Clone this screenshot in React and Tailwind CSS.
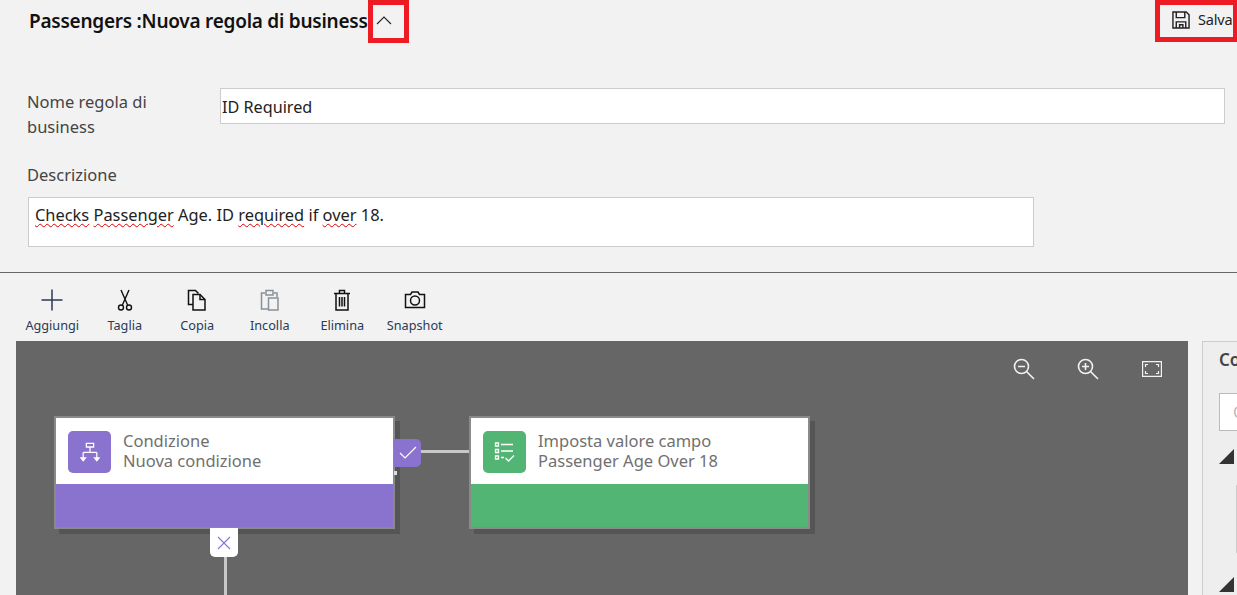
import React from "react";

function CutIcon() {
  return (
    <svg width="24" height="24" viewBox="0 0 24 24" fill="none" stroke="#111" strokeWidth="1.4">
      <path d="M8 2l6.600 15M16 2L9.400 17" />
      <circle cx="8" cy="19.500" r="2.500" />
      <circle cx="16" cy="19.500" r="2.500" />
    </svg>
  );
}

function CopyIcon() {
  return (
    <svg width="24" height="24" viewBox="0 0 24 24" fill="none" stroke="#111" strokeWidth="1.500">
      <path d="M8 16.500H3.500V2.500h7l3 3" />
      <path d="M8 6.500h7l5 5v10.500H8z" fill="#f2f2f2" />
      <path d="M15 6.500v5h5" />
    </svg>
  );
}

function PasteIcon() {
  return (
    <svg width="24" height="24" viewBox="0 0 24 24" fill="none" stroke="#8a9099" strokeWidth="1.500">
      <path d="M7 5H3.500v16H10M16 5h3v4" />
      <path d="M8 2.500h7V7H8z" />
      <path d="M10.500 10h9.500v12h-9.500z" fill="#f2f2f2" />
    </svg>
  );
}

function TrashIcon() {
  return (
    <svg width="24" height="24" viewBox="0 0 24 24" fill="none" stroke="#111" strokeWidth="1.500">
      <path d="M4 5.500h16M9.500 5V2.500h5V5M6 5.500V22h12V5.500" />
      <path d="M9.500 9v9.500M12 9v9.500M14.500 9v9.500" />
    </svg>
  );
}

function CameraIcon() {
  return (
    <svg width="24" height="24" viewBox="0 0 24 24" fill="none" stroke="#111" strokeWidth="1.500">
      <path d="M2.500 6.500h5l1.500-2.500h6l1.500 2.500h5v13h-19z" />
      <circle cx="12" cy="12.500" r="4.500" />
    </svg>
  );
}

function PlusIcon() {
  return (
    <svg width="24" height="24" viewBox="0 0 24 24" fill="none" stroke="#2b3a55" strokeWidth="1.500">
      <path d="M12 1.500v21M1.500 12h21" />
    </svg>
  );
}

const tools = [
  { label: "Aggiungi", icon: <PlusIcon /> },
  { label: "Taglia", icon: <CutIcon /> },
  { label: "Copia", icon: <CopyIcon /> },
  { label: "Incolla", icon: <PasteIcon /> },
  { label: "Elimina", icon: <TrashIcon /> },
  { label: "Snapshot", icon: <CameraIcon /> },
];

function Zoom({ plus }) {
  return (
    <svg width="24" height="24" viewBox="0 0 24 24" fill="none" stroke="#f2f2f2" strokeWidth="1.600">
      <circle cx="9.500" cy="9.500" r="7" />
      <path d="M14.500 14.500l7.500 7.500M6 9.500h7" />
      {plus && <path d="M9.500 6v7" />}
    </svg>
  );
}

function FitIcon() {
  return (
    <svg width="20" height="16" viewBox="0 0 20 16" fill="none" stroke="#f2f2f2" strokeWidth="1.200" className="ml-[2px] mt-[4px]">
      <path d="M.6.6h18.800v14.800H.6z" />
      <path d="M3.500 6V3.500H6M14 3.500h2.500V6M16.500 10v2.500H14M6 12.500H3.500V10" />
    </svg>
  );
}

function FlowIcon() {
  return (
    <svg width="20" height="22" viewBox="0 0 22 24" fill="none" stroke="#fff" strokeWidth="1.400">
      <path d="M7 2.500h8v4H7zM11 6.500v6M3.500 12.500h15M3.500 12.500v7M18.500 12.500v7" />
      <path d="M1 18.500l2.500 3 2.500-3zM16 18.500l2.500 3 2.500-3z" fill="#fff" />
    </svg>
  );
}

function ListIcon() {
  return (
    <svg width="22" height="22" viewBox="0 0 22 22" fill="none" stroke="#fff" strokeWidth="1.300">
      <path d="M1.500 2h3v3h-3zM1.500 8.500h3v3h-3zM1.500 15h3v3h-3z" />
      <path d="M7 3.500h12M7 10h12M7 16.500h3M11.500 17l3 3 5.500-5.500" />
    </svg>
  );
}

function Node({ className, accent, title, subtitle, icon }) {
  return (
    <div className={`absolute top-[75px] w-[341px] h-[113px] border-2 border-[#8a8a8a] bg-white shadow-[5px_5px_0_#555] flex flex-col ${className}`}>
      <div className="h-[66px] flex items-start pl-[12px] pt-[13px] bg-white">
        <div className={`w-[43px] h-[42px] rounded-[5px] flex items-center justify-center ${accent}`}>{icon}</div>
        <div className="ml-[12px] text-[16.500px] leading-[20px] text-[#707070]">
          <div>{title}</div>
          <div>{subtitle}</div>
        </div>
      </div>
      <div className={`flex-1 ${accent}`} />
    </div>
  );
}

export default function App() {
  const spell = "underline decoration-wavy decoration-[#e00000] decoration-1 underline-offset-2";

  return (
    <div className="w-[1237px] h-[595px] overflow-hidden bg-[#f2f2f2] flex flex-col font-['Noto_Sans',sans-serif] text-[#333]">
      <header className="h-[43px] flex items-start justify-between shrink-0">
        <div className="flex items-start pl-[29px]">
          <h1 className="mt-[9px] text-[19px] leading-[24px] font-semibold text-[#111] tracking-[-0.25px] w-[339px] whitespace-nowrap">
            Passengers :Nuova regola di business
          </h1>
          <button className="w-[41px] h-[43px] border-[5px] border-[#ed1c24] flex items-center pl-[3px]">
            <svg width="16" height="10" viewBox="0 0 16 10" fill="none" stroke="#222" strokeWidth="1.100" className="mt-[-3px]">
              <path d="M1 9l7-7 7 7" />
            </svg>
          </button>
        </div>
        <button className="w-[82px] h-[42px] border-[5px] border-r-[4px] border-[#ed1c24] flex items-center pl-[12px] pb-[2px] text-[14.500px] text-[#222] tracking-[-0.2px]">
          <svg width="18" height="18" viewBox="0 0 19 19" fill="none" stroke="#222" strokeWidth="1.500" className="shrink-0 mr-[8px]">
            <path d="M1 1h14l3 3v14H1z" />
            <path d="M4.500 1v6h9V1M4.500 18v-6.500h10V18M8 18v-3.500h3.500V18" />
          </svg>
          Salva
        </button>
      </header>

      <section className="h-[230px] shrink-0 border-b border-[#666] pl-[28px]">
        <div className="flex mt-[45px] pr-[12px]">
          <label className="w-[192px] pr-[50px] ml-[-1px] mr-[1px] text-[16.500px] leading-[25px] pt-[1px] text-[#444]">Nome regola di business</label>
          <div className="flex-1 h-[36px] bg-white border border-[#ccc] pl-[1px] pt-[2px] flex items-center text-[16.200px] text-[#222]">ID Required</div>
        </div>
        <label className="block mt-[23px] ml-[-1px] text-[16.500px] leading-[25px] text-[#444]">Descrizione</label>
        <div className="mt-[10px] w-[1006px] h-[50px] bg-white border border-[#ccc] pl-[6px] pt-[5px] text-[16.400px] leading-[24px] text-[#222]">
          <span className={spell}>Checks</span>{" "}
          <span className={spell}>Passenger</span> Age. ID{" "}
          <span className={spell}>required</span> if{" "}
          <span className={spell}>over</span> 18.
        </div>
      </section>

      <nav className="h-[68px] shrink-0 flex pl-[16px] pt-[15px]">
        {tools.map((tool) => (
          <div key={tool.label} className="w-[72.500px] flex flex-col items-center text-[12.700px] leading-[16px] text-[#2b3a55]">
            <div className="h-[24px] mb-[5px]">{tool.icon}</div>
            {tool.label}
          </div>
        ))}
      </nav>

      <main className="flex-1 flex pl-[16px] min-h-0">
        <div className="w-[1172px] relative bg-[#666666] overflow-hidden">
          <div className="absolute top-[16px] left-[996px] flex gap-[40px] items-start">
            <Zoom />
            <Zoom plus />
            <FitIcon />
          </div>

          <Node
            className="left-[38px]"
            accent="bg-[#8a72cf]"
            title="Condizione"
            subtitle="Nuova condizione"
            icon={<FlowIcon />}
          />
          <div className="absolute left-[378px] top-[98px] w-[27px] h-[28px] bg-[#8a72cf] rounded-r-[5px] flex items-center justify-center">
            <svg width="18" height="14" viewBox="0 0 18 14" fill="none" stroke="#fff" strokeWidth="1.200">
              <path d="M1 7l5 5L17 1" />
            </svg>
          </div>
          <div className="absolute left-[378px] top-[130px] w-[3px] h-[4px] bg-[#ddd]" />
          <div className="absolute left-[405px] top-[109px] w-[49px] h-[3px] bg-[#c8c8c8]" />

          <Node
            className="left-[453px]"
            accent="bg-[#53b574]"
            title="Imposta valore campo"
            subtitle="Passenger Age Over 18"
            icon={<ListIcon />}
          />

          <div className="absolute left-[194px] top-[187px] w-[28px] h-[29px] bg-white rounded-b-[5px] flex items-center justify-center">
            <svg width="14" height="14" viewBox="0 0 14 14" fill="none" stroke="#8a72cf" strokeWidth="1.100">
              <path d="M1 1l12 12M13 1L1 13" />
            </svg>
          </div>
          <div className="absolute left-[208px] top-[216px] w-[3px] h-[40px] bg-[#c8c8c8]" />
        </div>

        <aside className="ml-[14px] flex-1 bg-[#eeeeee] border-l border-t border-[#ccc] pl-[16px] pt-[1px] min-w-0 overflow-hidden">
          <div className="text-[17px] font-semibold leading-[34px] text-[#444]">Co</div>
          <div className="mt-[16px] w-[40px] h-[38px] bg-white border border-[#bbb] flex items-center pl-[13px] text-[#bbb] text-[16px]">C</div>
          <div className="mt-[18px] w-0 h-0 border-b-[15px] border-l-[15px] border-b-[#333] border-l-transparent" />
          <div className="mt-[21px] ml-[17px] w-[2px] h-[68px] bg-[#ccc]" />
          <div className="mt-[24px] w-0 h-0 border-b-[15px] border-l-[15px] border-b-[#333] border-l-transparent" />
        </aside>
      </main>
    </div>
  );
}
